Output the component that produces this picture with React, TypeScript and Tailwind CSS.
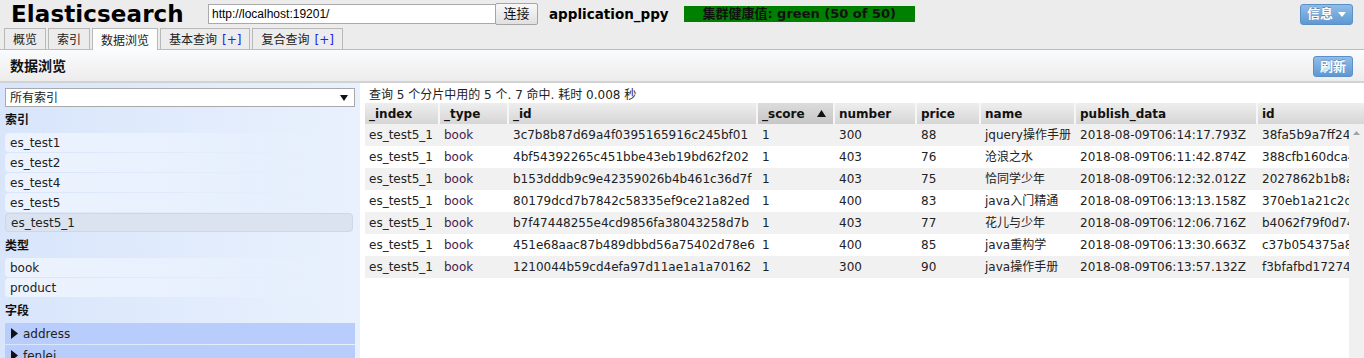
import { Fragment } from 'react';

const font = "font-['DejaVu_Sans','Noto_Sans_CJK_SC',sans-serif]";

const columns = [
  { key: '_index', w: 75 },
  { key: '_type', w: 69 },
  { key: '_id', w: 249 },
  { key: '_score', w: 77 },
  { key: 'number', w: 82 },
  { key: 'price', w: 64 },
  { key: 'name', w: 95 },
  { key: 'publish_data', w: 182 },
  { key: 'id', w: 220 },
];

const rows = [
  ['3c7b8b87d69a4f0395165916c245bf01', '300', '88', 'jquery操作手册', '2018-08-09T06:14:17.793Z', '38fa5b9a7ff24c1b9'],
  ['4bf54392265c451bbe43eb19bd62f202', '403', '76', '沧浪之水', '2018-08-09T06:11:42.874Z', '388cfb160dca4e2a1'],
  ['b153dddb9c9e42359026b4b461c36d7f', '403', '75', '恰同学少年', '2018-08-09T06:12:32.012Z', '2027862b1b8a4c0d2'],
  ['80179dcd7b7842c58335ef9ce21a82ed', '400', '83', 'java入门精通', '2018-08-09T06:13:13.158Z', '370eb1a21c2d4f8e3'],
  ['b7f47448255e4cd9856fa38043258d7b', '403', '77', '花儿与少年', '2018-08-09T06:12:06.716Z', 'b4062f79f0d74a5b6'],
  ['451e68aac87b489dbbd56a75402d78e6', '400', '85', 'java重构学', '2018-08-09T06:13:30.663Z', 'c37b054375a84e1f7'],
  ['1210044b59cd4efa97d11ae1a1a70162', '300', '90', 'java操作手册', '2018-08-09T06:13:57.132Z', 'f3bfafbd172744a08'],
];

const gridCols = 'grid grid-cols-[75px_69px_249px_77px_82px_64px_95px_182px_220px]';

function Tab({ label, active, plus }: { label: string; active?: boolean; plus?: boolean }) {
  return (
    <div
      className={`h-[21px] px-[8px] pt-[2px] border border-b-0 border-[#b9b9b9] flex items-center text-[12px] text-[#222] ${
        active ? 'bg-[#fcfcfc] h-[22px] -mb-px' : 'bg-[#ececec]'
      }`}
    >
      {label}
      {plus && <span className="ml-[5px] text-[#2222ee]">[+]</span>}
    </div>
  );
}

function BlueButton({ children }: { children: React.ReactNode }) {
  return (
    <button className="h-[21px] px-[6px] rounded-[3px] border border-[#5a8fc8] bg-gradient-to-b from-[#8fbde9] to-[#5e98d2] text-white font-bold text-[13px] flex items-center gap-[5px] [text-shadow:0_-1px_0_rgba(0,0,0,0.25)]">
      {children}
    </button>
  );
}

function SideItem({ label, selected }: { label: string; selected?: boolean }) {
  return (
    <div
      className={`h-[19px] mb-px rounded-[4px] pl-[5px] flex items-center text-[12px] text-[#222] ${
        selected
          ? 'bg-[#dae3ef] border border-[#cdd7e5] pl-[4px]'
          : 'bg-gradient-to-r from-[#ecf3fe] via-[#e9f1fe] to-transparent'
      }`}
    >
      {label}
    </div>
  );
}

function FieldItem({ label }: { label: string }) {
  return (
    <div className="h-[21px] mb-px bg-[#b8cdfb] flex items-center pl-[6px] text-[12px] text-[#222]">
      <svg width="7" height="11" viewBox="0 0 7 11" className="mr-[5px]">
        <path d="M0 0 L7 5.5 L0 11 Z" fill="#111" />
      </svg>
      {label}
    </div>
  );
}

export default function App() {
  return (
    <div className={`${font} w-[1364px] h-[358px] overflow-hidden bg-white flex flex-col`}>
      {/* top bar */}
      <div className="bg-[#ececec] h-[28px] flex items-center pl-[11px] pr-[11px] shrink-0">
        <div className="text-[23px] font-bold text-black tracking-[0.1px] w-[197px]">Elasticsearch</div>
        <input
          readOnly
          value="http://localhost:19201/"
          className="w-[288px] h-[20px] border border-[#a9a9a9] bg-white px-[3px] text-[12px] font-['Liberation_Sans',sans-serif] text-black outline-none"
        />
        <button className="h-[22px] w-[43px] -ml-px border border-[#a5a5a5] rounded-[2px] bg-gradient-to-b from-[#f8f8f8] to-[#e0e0e0] text-[13px] text-[#111]">
          连接
        </button>
        <div className="ml-[11px] text-[13.5px] font-bold text-black">application_ppy</div>
        <div className="ml-[15px] h-[16px] w-[231px] bg-[#008000] flex items-center justify-center text-[13px] font-bold text-[#111]">
          集群健康值: green (50 of 50)
        </div>
        <div className="ml-auto">
          <BlueButton>
            信息
            <svg width="8" height="5" viewBox="0 0 8 5">
              <path d="M0 0 L8 0 L4 5 Z" fill="#fff" />
            </svg>
          </BlueButton>
        </div>
      </div>

      {/* tabs */}
      <div className="bg-[#ececec] h-[22px] flex items-end gap-[2px] pl-[4px] border-b border-[#bdbdbd] shrink-0">
        <Tab label="概览" />
        <Tab label="索引" />
        <Tab label="数据浏览" active />
        <Tab label="基本查询" plus />
        <Tab label="复合查询" plus />
      </div>

      {/* sub header */}
      <div className="h-[33px] pt-[2px] bg-gradient-to-b from-[#fbfcfd] to-[#ececec] border-b-2 border-[#d2d2d2] flex items-center pl-[10px] pr-[11px] shrink-0">
        <div className="text-[14px] font-bold text-[#111]">数据浏览</div>
        <div className="ml-auto">
          <BlueButton>刷新</BlueButton>
        </div>
      </div>

      <div className="flex flex-1 min-h-0">
        {/* sidebar */}
        <div className="w-[360px] shrink-0 bg-gradient-to-r from-[#d8e5fb] to-[#e9f1fd] px-[5px] pt-[5px]">
          <div className="h-[19px] bg-white border border-[#a9a9a9] flex items-center pl-[4px] pr-[6px] text-[12px] text-[#222]">
            <span>所有索引</span>
            <svg width="8" height="6" viewBox="0 0 8 6" className="ml-auto">
              <path d="M0 0 L8 0 L4 6 Z" fill="#111" />
            </svg>
          </div>
          <div className="h-[26px] flex items-center text-[12px] font-bold text-[#111]">索引</div>
          <div className="pr-[2px]">
            <SideItem label="es_test1" />
            <SideItem label="es_test2" />
            <SideItem label="es_test4" />
            <SideItem label="es_test5" />
            <SideItem label="es_test5_1" selected />
          </div>
          <div className="h-[25px] flex items-center text-[12px] font-bold text-[#111]">类型</div>
          <div className="pr-[2px]">
            <SideItem label="book" />
            <SideItem label="product" />
          </div>
          <div className="h-[25px] flex items-center text-[12px] font-bold text-[#111]">字段</div>
          <FieldItem label="address" />
          <FieldItem label="fenlei" />
        </div>

        {/* results */}
        <div className="flex-1 min-w-0 pl-[5px] flex flex-col">
          <div className="h-[20px] flex items-center pl-[4px] pt-[4px] text-[12px] text-[#222]">
            查询 5 个分片中用的 5 个. 7 命中. 耗时 0.008 秒
          </div>
          <div className="overflow-hidden shrink-0">
            <div className={`${gridCols} h-[21px] w-max`}>
              {columns.map((c, i) => (
                <div
                  key={c.key}
                  className={`flex items-center pl-[4px] text-[12px] font-bold text-[#111] ${
                    i < columns.length - 1 ? 'border-r-2 border-[#f6f6f6]' : ''
                  } ${
                    c.key === '_score'
                      ? 'bg-gradient-to-b from-[#dcdcdc] to-[#c6c6c6]'
                      : 'bg-gradient-to-b from-[#eeeeee] to-[#d6d6d6]'
                  }`}
                >
                  {c.key}
                  {c.key === '_score' && (
                    <svg width="9" height="7" viewBox="0 0 9 7" className="ml-auto mr-[7px]">
                      <path d="M0 7 L9 7 L4.5 0 Z" fill="#111" />
                    </svg>
                  )}
                </div>
              ))}
            </div>
          </div>
          <div className="flex flex-1 min-h-0">
            <div className="flex-1 min-w-0 overflow-hidden">
              <div className={`${gridCols} w-max auto-rows-[22px]`}>
                {rows.map((r, i) => {
                  const bg = i % 2 === 0 ? 'bg-[#f1f1f1]' : 'bg-white';
                  const cells = ['es_test5_1', 'book', r[0], '1', r[1], r[2], r[3], r[4], r[5]];
                  return (
                    <Fragment key={i}>
                      {cells.map((v, j) => (
                        <div
                          key={j}
                          className={`${bg} flex items-center pl-[4px] text-[12px] whitespace-nowrap overflow-hidden ${
                            j === 1 ? 'text-[#4a1a4a]' : 'text-[#222]'
                          }`}
                        >
                          {v}
                        </div>
                      ))}
                    </Fragment>
                  );
                })}
              </div>
            </div>
            <div className="w-[15px] shrink-0 bg-[#f0f0f0] flex justify-center pt-[7px]">
              <svg width="7" height="4" viewBox="0 0 7 4">
                <path d="M0 4 L7 4 L3.5 0 Z" fill="#a3a3a3" />
              </svg>
            </div>
          </div>
        </div>
      </div>
    </div>
  );
}
